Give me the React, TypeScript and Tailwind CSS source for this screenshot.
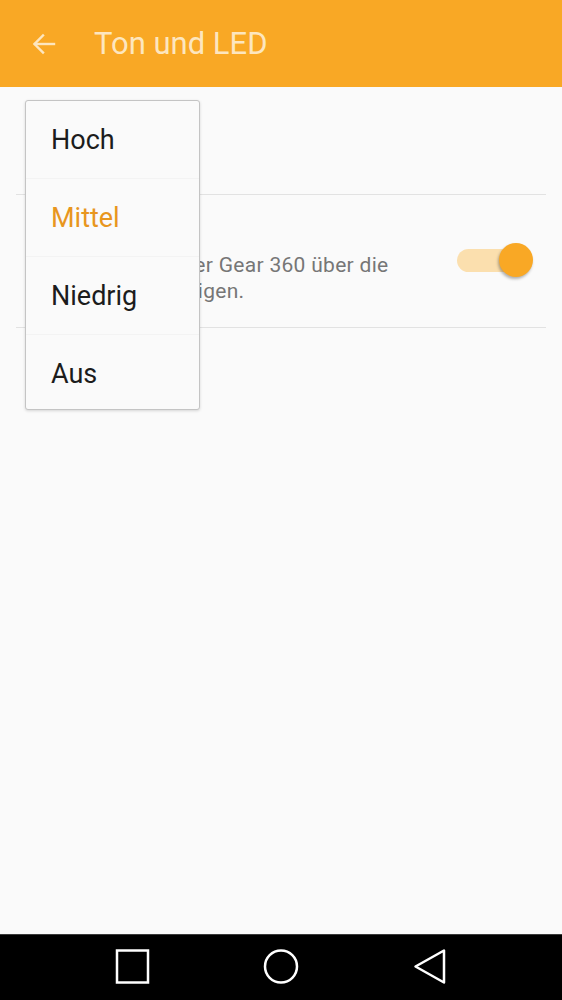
import React from "react";

const options = ["Hoch", "Mittel", "Niedrig", "Aus"];

function NavBar() {
    return (
        <div className="h-[66px] bg-black border-t border-[#3a3a3a] flex justify-center gap-[113px] pt-[14px]">
            <svg width="36" height="36" viewBox="0 0 36 36" fill="none" stroke="white" strokeWidth="2.5">
                <rect x="3" y="1.5" width="31" height="32" />
            </svg>
            <svg width="36" height="36" viewBox="0 0 36 36" fill="none" stroke="white" strokeWidth="2.5">
                <circle cx="18" cy="17.5" r="16" />
            </svg>
            <svg width="36" height="36" viewBox="0 0 36 36" fill="none" stroke="white" strokeWidth="2.5" strokeLinejoin="round">
                <polygon points="3.5,17.5 32,1.5 32,33.5" />
            </svg>
        </div>
    );
}

export default function App() {
    return (
        <div
            className="w-[562px] h-[1000px] flex flex-col bg-[#fafafa] overflow-hidden"
            style={{ fontFamily: "Roboto, 'Noto Sans', sans-serif" }}
        >
            <header className="h-[87px] bg-[#f9a825] flex items-center pl-[32px] shrink-0">
                <svg width="24" height="24" viewBox="0 0 24 24" fill="none" stroke="#fde6bf" strokeWidth="2.4" strokeLinecap="square">
                    <path d="M3 12h19" />
                    <path d="M11 3.5 2.5 12l8.5 8.5" />
                </svg>
                <h1 className="ml-[38px] text-[31px] text-[#fde6bf] leading-none">Ton und LED</h1>
            </header>

            <main className="flex-1 relative">
                <div className="mx-4">
                    <div className="h-[107px]" />
                    <div className="h-px bg-[#e2e2e2]" />
                    <div className="h-[132px] pl-[21px] pr-4 pt-[57px] flex items-start">
                        <div className="flex-1 text-[21px] tracking-[0.3px] text-[#767676] leading-[26px]">
                            Betriebsstatus der Gear 360 über die
                            <br />
                            LED-Lampe anzeigen.
                        </div>
                        <div className="relative w-[76px] h-[34px] mt-[-9px] mr-[-3px]">
                            <div className="absolute left-0 top-[6px] w-[58px] h-[23px] rounded-full bg-[#fbdfae]" />
                            <div className="absolute right-0 top-0 w-[34px] h-[34px] rounded-full bg-[#f9a825] shadow-[-1px_2px_3px_rgba(0,0,0,0.3)]" />
                        </div>
                    </div>
                    <div className="h-px bg-[#e2e2e2]" />
                </div>

                <div className="absolute left-[25px] top-[13px] w-[175px] h-[310px] overflow-hidden bg-[#fafafa] border border-[#c4c4c4] rounded-[3px] shadow-[0_1px_3px_rgba(0,0,0,0.15)]">
                    {options.map((o, i) => (
                        <div
                            key={o}
                            className={
                                "h-[78px] leading-[78px] pl-[25px] text-[27px] " +
                                (i < options.length - 1 ? "border-b border-[#f3f3f3] " : "") +
                                (o === "Mittel" ? "text-[#e8961e]" : "text-[#1c1c1c]")
                            }
                        >
                            {o}
                        </div>
                    ))}
                </div>
            </main>

            <NavBar />
        </div>
    );
}
